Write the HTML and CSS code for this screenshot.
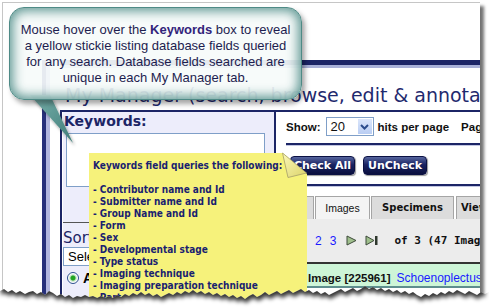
FILE: index.html
```html
<!DOCTYPE html>
<html lang="en">
<head>
    <meta charset="UTF-8">
    <meta name="viewport" content="width=device-width, initial-scale=1.0">
    <title>My Manager - keywords tip</title>
    <link rel="stylesheet" href="styles.css">
</head>
<body>
    <!-- screenshot of the page -->
    <div class="shot">
        <div class="frame">
            <div class="frame-in">
                <div class="bar"></div>
                <div class="title">My Manager (search, browse, edit &amp; annotate)</div>
                <div class="cols">
                    <div class="kw">
                        <div class="kw-label">Keywords:</div>
                        <div class="kw-box"></div>
                        <div class="kw-rule"></div>
                        <div class="sort-title">Sort by</div>
                        <div class="sort-select">Select</div>
                        <div class="radio-row"><span class="radio"></span><b>All</b></div>
                    </div>
                    <div class="res">
                        <div class="show-row">
                            <b>Show:</b>
                            <span class="sel">
                                <span class="sel-val">20</span>
                                <span class="sel-btn">
                                    <svg width="9" height="6" viewBox="0 0 9 6"><path d="M1 1 L4.5 4.5 L8 1" fill="none" stroke="#2b4c8c" stroke-width="2"/></svg>
                                </span>
                            </span>
                            <b class="hits">hits per page</b>
                            <b class="pag">Page</b>
                        </div>
                        <div class="rule"></div>
                        <div class="btns">
                            <button class="btn btn-check">Check All</button>
                            <button class="btn btn-uncheck">UnCheck</button>
                        </div>
                        <div class="rule rule-2"></div>
                        <div class="tabs">
                            <div class="tab tab-first">All</div>
                            <div class="tab tab-active">Images</div>
                            <div class="tab tab-bold tab-spec">Specimens</div>
                            <div class="tab tab-bold tab-view">Views</div>
                        </div>
                        <div class="pager">
                            <a class="pg">2</a>
                            <a class="pg">3</a>
                            <svg class="arr" width="11" height="11" viewBox="0 0 11 11"><path d="M1 1 L10 5.5 L1 10 Z" fill="#9fbf8c" stroke="#3d4a3a" stroke-width="1"/></svg>
                            <svg class="arr arr-end" width="14" height="11" viewBox="0 0 14 11"><path d="M1 1 L9 5.5 L1 10 Z" fill="#9fbf8c" stroke="#3d4a3a" stroke-width="1"/><rect x="10" y="1" width="2.5" height="9" fill="#2f382e"/></svg>
                            <span class="of">of 3 (47 Images)</span>
                        </div>
                        <div class="hit">
                            <b>Image [225961]</b>
                            <a class="hit-link">Schoenoplectus acutus</a>
                        </div>
                        <div class="hit-next"></div>
                    </div>
                </div>
            </div>
        </div>
    </div>

    <!-- callout -->
    <svg class="tail" width="60" height="60" viewBox="0 0 60 60">
        <defs>
            <linearGradient id="tailg" x1="0" y1="0" x2="1" y2="1">
                <stop offset="0" stop-color="#7bb3ae"/>
                <stop offset="1" stop-color="#3f7c78"/>
            </linearGradient>
            <filter id="tails" x="-50%" y="-50%" width="200%" height="200%">
                <feDropShadow dx="2" dy="3" stdDeviation="1.5" flood-color="#000" flood-opacity="0.35"/>
            </filter>
        </defs>
        <path d="M5 3 L25 3 L48 51 Z" fill="url(#tailg)" filter="url(#tails)"/>
    </svg>
    <div class="bubble">
        <p>Mouse hover over the <b>Keywords</b> box to reveal<br>a yellow stickie listing database fields queried<br>for any search. Database fields searched are<br>unique in each My Manager tab.</p>
    </div>

    <!-- yellow stickie -->
    <div class="stickie">
        <p>Keywords field queries the following:</p>
        <ul>
            <li>- Contributor name and Id</li>
            <li>- Submitter name and Id</li>
            <li>- Group Name and Id</li>
            <li>- Form</li>
            <li>- Sex</li>
            <li>- Developmental stage</li>
            <li>- Type status</li>
            <li>- Imaging technique</li>
            <li>- Imaging preparation technique</li>
            <li>- Part</li>
        </ul>
    </div>
    <svg class="fold" width="30" height="30" viewBox="0 0 30 30">
        <defs>
            <linearGradient id="foldg" x1="0" y1="0" x2="1" y2="1">
                <stop offset="0" stop-color="#fbf8b8"/>
                <stop offset="1" stop-color="#dcd36a"/>
            </linearGradient>
        </defs>
        <path d="M2.5 3 L26.5 23 L8 27.5 Z" fill="url(#foldg)" stroke="#a59d6a" stroke-width="0.8"/>
    </svg>

    <!-- torn bottom edge -->
    <svg class="torn" width="489" height="308" viewBox="0 0 489 308">
        <defs>
            <clipPath id="below">
                <path d="M0 291 L4 289 L8 292 L12 290 L16 293 L20 291 L25 294 L29 292 L33 291 L37 294 L41 292 L45 295 L49 291 L53 293 L57 296 L61 294 L65 297 L69 295 L73 298 L77 296 L81 297 L85 295 L89 297 L93 296 L97 298 L101 296 L105 298 L109 296 L113 298 L117 295 L121 297 L125 294 L129 296 L133 293 L137 295 L141 292 L145 295 L149 293 L153 296 L157 294 L161 297 L165 295 L169 293 L173 295 L177 292 L181 294 L185 291 L189 293 L193 290 L197 293 L201 291 L205 294 L209 292 L213 295 L217 293 L221 296 L225 294 L229 297 L233 295 L237 298 L241 296 L245 299 L249 296 L253 294 L257 297 L261 295 L265 292 L269 295 L273 293 L277 291 L281 294 L285 292 L289 290 L293 293 L297 291 L301 289 L305 292 L309 290 L313 293 L317 291 L321 294 L325 292 L329 295 L333 293 L337 291 L341 289 L345 292 L349 290 L353 288 L357 291 L361 289 L365 286 L369 289 L373 287 L377 290 L381 288 L385 291 L389 289 L393 292 L397 290 L401 293 L405 291 L409 294 L413 292 L417 295 L421 297 L425 294 L429 296 L433 293 L437 295 L441 292 L445 294 L449 291 L453 293 L457 290 L461 292 L465 294 L469 291 L473 293 L477 295 L481 292 L485 294 L489 292 L489 308 L0 308 Z"/>
            </clipPath>
            <filter id="blur" x="-10%" y="-50%" width="120%" height="200%">
                <feGaussianBlur stdDeviation="2"/>
            </filter>
        </defs>
        <rect x="0" y="270" width="489" height="38" fill="#fff" clip-path="url(#below)"/>
        <g clip-path="url(#below)">
            <path transform="translate(1 4)" filter="url(#blur)" fill="#000" fill-opacity="0.8" d="M0 291 L4 289 L8 292 L12 290 L16 293 L20 291 L25 294 L29 292 L33 291 L37 294 L41 292 L45 295 L49 291 L53 293 L57 296 L61 294 L65 297 L69 295 L73 298 L77 296 L81 297 L85 295 L89 297 L93 296 L97 298 L101 296 L105 298 L109 296 L113 298 L117 295 L121 297 L125 294 L129 296 L133 293 L137 295 L141 292 L145 295 L149 293 L153 296 L157 294 L161 297 L165 295 L169 293 L173 295 L177 292 L181 294 L185 291 L189 293 L193 290 L197 293 L201 291 L205 294 L209 292 L213 295 L217 293 L221 296 L225 294 L229 297 L233 295 L237 298 L241 296 L245 299 L249 296 L253 294 L257 297 L261 295 L265 292 L269 295 L273 293 L277 291 L281 294 L285 292 L289 290 L293 293 L297 291 L301 289 L305 292 L309 290 L313 293 L317 291 L321 294 L325 292 L329 295 L333 293 L337 291 L341 289 L345 292 L349 290 L353 288 L357 291 L361 289 L365 286 L369 289 L373 287 L377 290 L381 288 L385 291 L389 289 L393 292 L397 290 L401 293 L405 291 L409 294 L413 292 L417 295 L421 297 L425 294 L429 296 L433 293 L437 295 L441 292 L445 294 L449 291 L453 293 L457 290 L461 292 L465 294 L469 291 L473 293 L477 295 L481 292 L484 293 L484 250 L0 250 Z"/>
        </g>
    </svg>
</body>
</html>
```

FILE: styles.css
```css
body {
    margin: 0;
    padding: 2px 0 0 2px;
    width: 489px;
    height: 308px;
    box-sizing: border-box;
    position: relative;
    overflow: hidden;
    background-color: #fff;
    font-family: "Liberation Sans", Arial, sans-serif;
}

/* screenshot frame */
.shot {
    width: 477px;
    height: 300px;
    border-top: 1px solid #c6c6c6;
    border-left: 1px solid #c6c6c6;
    background-color: #fff;
    overflow: hidden;
    box-shadow: 4px 4px 3px rgba(0, 0, 0, 0.55);
}
.frame {
    margin: 57px 0 0 39px;
    border-left: 4px solid #27307a;
}
.frame-in {
    border-left: 4px solid #b2b6de;
    padding-left: 10px;
}
.bar {
    height: 5px;
    background-color: #1c2566;
    border-bottom: 3px solid #a9b1d8;
}
.title {
    font: 19px/22px "DejaVu Sans", Verdana, sans-serif;
    color: #1f2a6e;
    padding: 16px 0 4px 5px;
    border-bottom: 2px solid #1c2566;
    white-space: nowrap;
}
.cols {
    display: flex;
}

/* keywords panel */
.kw {
    width: 212px;
    height: 200px;
    flex-shrink: 0;
    border-left: 2px solid #1c2566;
    border-right: 2px solid #1c2566;
    background-color: #ededfb;
    box-shadow: inset 1px 0 0 #fff;
}
.kw-label {
    font: bold 14px/18px "DejaVu Sans", Verdana, sans-serif;
    color: #1c2566;
    padding-left: 2px;
}
.kw-box {
    margin: 3px 0 0 4px;
    width: 197px;
    height: 52px;
    border: 1px solid #7f9fc8;
    background-color: #fff;
}
.kw-rule {
    margin: 35px 0 0 1px;
    border-top: 1px solid #555;
}
.sort-title {
    margin-top: 7px;
    padding-left: 1px;
    font: 15px/17px "DejaVu Sans", Verdana, sans-serif;
    color: #1c2566;
}
.sort-select {
    margin-left: 1px;
    width: 195px;
    height: 17px;
    padding-left: 4px;
    border: 1px solid #7f9fc8;
    background-color: #fff;
    font-size: 13px;
    line-height: 17px;
    color: #000;
}
.radio-row {
    margin-top: 4px;
    padding-left: 5px;
    display: flex;
    align-items: center;
    gap: 4px;
    font-size: 14px;
}
.radio {
    width: 10px;
    height: 10px;
    border: 1px solid #2c4f8f;
    border-radius: 50%;
    background: radial-gradient(circle, #22a422 0 2px, #bfe2bf 3px, #fff 4.5px);
}

/* results panel */
.res {
    flex: 1;
    min-width: 0;
    padding-left: 10px;
    white-space: nowrap;
}
.res * {
    flex-shrink: 0;
}
.show-row {
    margin-top: 5px;
    height: 19px;
    display: flex;
    align-items: center;
    font-size: 11.5px;
    color: #111;
}
.sel {
    margin-left: 5px;
    width: 46px;
    height: 17px;
    border: 1px solid #7f9fc8;
    display: flex;
    align-items: center;
    justify-content: space-between;
}
.sel-val {
    font-weight: normal;
    font-size: 13px;
    padding-left: 4px;
}
.sel-btn {
    width: 14px;
    height: 15px;
    margin-right: 1px;
    background: linear-gradient(#dbe6fb, #b9cdf3);
    display: flex;
    align-items: center;
    justify-content: center;
}
.hits {
    margin-left: 4px;
}
.pag {
    margin-left: 12px;
}
.rule {
    margin-top: 7px;
    height: 2px;
    background-color: #1c2566;
    border-bottom: 1px solid #c3c7e2;
}
.rule-2 {
    margin-top: 9px;
}
.btns {
    margin: 10px 0 0 4px;
    display: flex;
    gap: 8px;
}
.btn {
    height: 19px;
    padding: 0;
    border: 1px solid #0b1144;
    border-radius: 4px;
    background: linear-gradient(#56659e, #1a2362 45%, #0a0f3e);
    color: #fff;
    font: bold 11px/17px "DejaVu Sans", Verdana, sans-serif;
    box-shadow: 1px 1px 1px rgba(0, 0, 0, 0.4);
}
.btn-check {
    width: 65px;
}
.btn-uncheck {
    width: 64px;
}
.tabs {
    margin: 9px 0 0 -6px;
    height: 23px;
    display: flex;
    gap: 1px;
}
.tab {
    height: 22px;
    border: 1px solid #a5a5a5;
    border-bottom: none;
    background-color: #dcdcdc;
    font-size: 10.5px;
    line-height: 22px;
    text-align: center;
    color: #111;
}
.tab-first {
    width: 32px;
}
.tab-active {
    width: 53px;
    background-color: #f4f4f4;
}
.tab-bold {
    font: bold 10px/22px "DejaVu Sans", Verdana, sans-serif;
}
.tab-spec {
    width: 81px;
}
.tab-view {
    margin-left: 1px;
    width: 50px;
    text-align: left;
    padding-left: 4px;
}
.pager {
    margin-left: -6px;
    height: 43px;
    padding-left: 35px;
    background-color: #ececec;
    border-bottom: 2px solid #333;
    display: flex;
    align-items: center;
}
.pg {
    color: #1a1aff;
    font-size: 12px;
    margin-right: 8px;
}
.arr {
    margin-left: 2px;
    margin-right: 6px;
}
.arr-end {
    margin-right: 15px;
}
.of {
    font: bold 11px "DejaVu Sans Mono", "Liberation Mono", monospace;
    color: #111;
}
.hit {
    margin-left: -6px;
    height: 24px;
    padding: 0 0 1px 28px;
    box-sizing: border-box;
    background-color: #cdf5d7;
    border-bottom: 2px solid #5e8e8e;
    display: flex;
    align-items: flex-end;
    font-size: 11.5px;
    line-height: 14px;
    color: #111;
}
.hit-link {
    margin-left: 6px;
    font-size: 12px;
    color: #1a1aff;
}
.hit-next {
    height: 20px;
}

/* callout bubble */
.bubble {
    position: absolute;
    left: 9px;
    top: 7px;
    width: 293px;
    height: 93px;
    box-sizing: border-box;
    border: 1px solid #4e8a86;
    border-radius: 15px;
    background-color: rgba(246, 251, 250, 0.92);
    box-shadow: inset 0 0 11px 3px rgba(78, 140, 135, 0.9), 3px 4px 5px rgba(0, 0, 0, 0.35);
    display: flex;
    align-items: center;
    justify-content: center;
}
.bubble p {
    margin: 0;
    font-size: 13px;
    line-height: 16px;
    text-align: center;
    color: #1d1d4f;
}
.bubble b {
    color: #33247a;
}
.tail {
    position: absolute;
    left: 25px;
    top: 92px;
}

/* yellow stickie */
.stickie {
    position: absolute;
    left: 89px;
    top: 153px;
    width: 218px;
    height: 155px;
    box-sizing: border-box;
    padding: 7px 0 0 4px;
    background-color: #f6f27b;
    clip-path: polygon(0 0, 194px 0, 218px 21px, 218px 100%, 0 100%);
    font: bold 10px/12px "DejaVu Sans Condensed", "DejaVu Sans", sans-serif;
    font-stretch: condensed;
    color: #1a1f70;
}
.stickie p {
    margin: 0 0 12px 0;
}
.stickie ul {
    margin: 0;
    padding: 0;
    list-style: none;
}
.fold {
    position: absolute;
    left: 280px;
    top: 150px;
}
.torn {
    position: absolute;
    left: 0;
    top: 0;
    pointer-events: none;
}
```
